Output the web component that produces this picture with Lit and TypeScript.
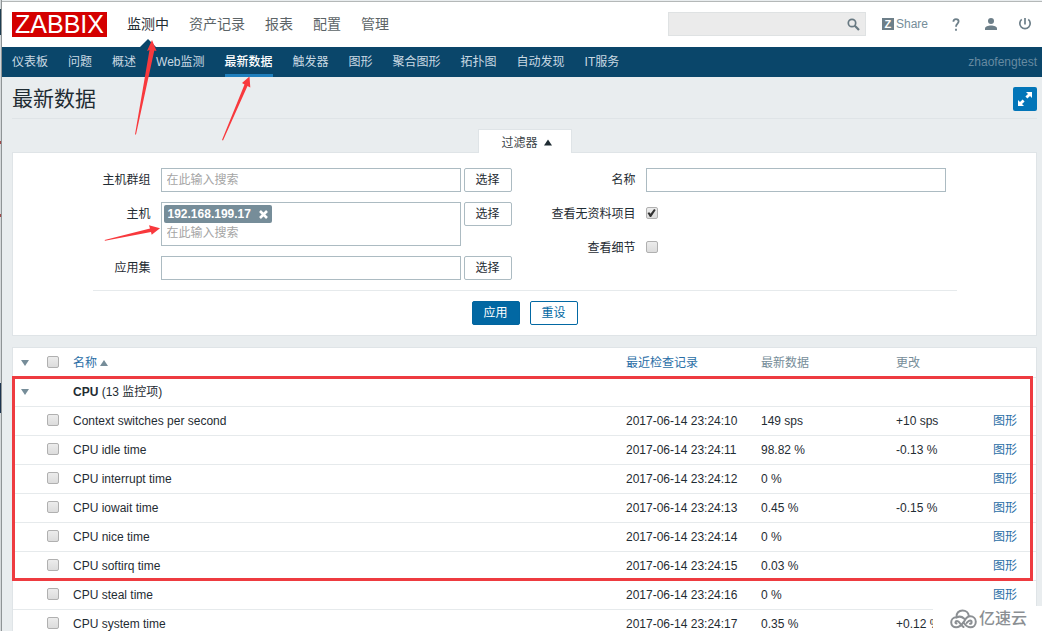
import { LitElement, html, css, svg, nothing } from "lit";
import { customElement, property } from "lit/decorators.js";
import { classMap } from "lit/directives/class-map.js";

interface Item {
  name: string;
  checked: string;
  value: string;
  change?: string;
  graph?: boolean;
}

const MENU = ["监测中", "资产记录", "报表", "配置", "管理"];
const SUBMENU = ["仪表板", "问题", "概述", "Web监测", "最新数据", "触发器", "图形", "聚合图形", "拓扑图", "自动发现", "IT服务"];
const ITEMS: Item[] = [
  { name: "Context switches per second", checked: "2017-06-14 23:24:10", value: "149 sps", change: "+10 sps", graph: true },
  { name: "CPU idle time", checked: "2017-06-14 23:24:11", value: "98.82 %", change: "-0.13 %", graph: true },
  { name: "CPU interrupt time", checked: "2017-06-14 23:24:12", value: "0 %", graph: true },
  { name: "CPU iowait time", checked: "2017-06-14 23:24:13", value: "0.45 %", change: "-0.15 %", graph: true },
  { name: "CPU nice time", checked: "2017-06-14 23:24:14", value: "0 %", graph: true },
  { name: "CPU softirq time", checked: "2017-06-14 23:24:15", value: "0.03 %", graph: true },
  { name: "CPU steal time", checked: "2017-06-14 23:24:16", value: "0 %", graph: true },
  { name: "CPU system time", checked: "2017-06-14 23:24:17", value: "0.35 %", change: "+0.12 %" },
];

const base = css`
  * { box-sizing: border-box; }
  a { text-decoration: none; color: inherit; }
  button, input { font: inherit; color: inherit; margin: 0; }
  ul { list-style: none; margin: 0; padding: 0; }
  svg { display: block; }
  .check {
    appearance: none;
    display: block;
    width: 12px;
    height: 12px;
    border: 1px solid #b0b0b0;
    border-radius: 2px;
    background: linear-gradient(#ececec, #dcdcdc);
  }
  .check:checked::before {
    content: "";
    display: block;
    width: 10px;
    height: 10px;
    background: #333;
    clip-path: polygon(10% 50%, 28% 42%, 40% 58%, 76% 10%, 92% 20%, 46% 90%, 34% 90%);
  }
`;

@customElement("top-header")
class TopHeader extends LitElement {
  static styles = [base, css`
    :host { display: block; }
    .bar {
      display: flex;
      align-items: center;
      height: 46px;
      padding: 0 10px 1px;
      background: #fff;
      border-top: 1px solid #b4b8b8;
      color: #5c6467;
    }
    .logo {
      display: flex;
      align-items: center;
      justify-content: center;
      width: 95px;
      height: 25px;
      background: #d40000;
      color: #fff;
      font-size: 25px;
      line-height: 25px;
    }
    .menu { display: flex; gap: 20px; margin-left: 20px; font-size: 14px; }
    .menu a { display: block; position: relative; line-height: 24px; }
    .menu .active { color: #1f2c33; }
    .menu .active::after {
      content: "";
      position: absolute;
      left: 50%;
      top: 27px;
      border: 8px solid transparent;
      border-top: 0;
      border-bottom-color: #0a466a;
      transform: translateX(-50%);
    }
    .search {
      display: flex;
      align-items: center;
      width: 198px;
      height: 24px;
      margin-left: auto;
      background: #ebebeb;
      border: 1px solid #dfe2e3;
    }
    .search input { flex: 1; min-width: 0; height: 22px; border: 0; background: none; padding: 0 5px; outline: none; }
    .search button { border: 0; background: none; padding: 0; margin-right: 5px; }
    .icons { display: flex; align-items: center; margin-left: 16px; color: #768d99; }
    .share { display: flex; align-items: center; gap: 2px; margin-right: 24px; }
    .z { display: grid; place-items: center; width: 12px; height: 12px; background: #6d7f89; color: #fff; font-size: 11px; font-weight: bold; line-height: 12px; }
    .help { display: block; width: 10px; margin-right: 23px; }
    .user { margin-right: 21px; }
  `];

  render() {
    return html`
      <header class="bar">
        <a class="logo" href="#">ZABBIX</a>
        <nav><ul class="menu">
          ${MENU.map((m, i) => html`<li><a href="#" class=${classMap({ active: i === 0 })}>${m}</a></li>`)}
        </ul></nav>
        <form class="search" role="search">
          <input type="text" aria-label="搜索">
          <button type="button" aria-label="搜索">
            <svg width="13" height="13" viewBox="0 0 13 13" fill="none" stroke="#687982" stroke-width="1.7">
              <circle cx="5" cy="5" r="3.7"/><path d="M7.8 7.8l4.2 4.2" stroke-width="2.2"/>
            </svg>
          </button>
        </form>
        <div class="icons">
          <a class="share" href="#"><span class="z">Z</span>Share</a>
          <a class="help" href="#" aria-label="帮助">
            <svg width="8" height="13" viewBox="0 0 8 13" fill="none" stroke="#6d7f89" stroke-width="1.8">
              <path d="M1.400 3.800C1.400 2 2.500 1.200 4 1.200s2.600.8 2.600 2.400C6.600 5.600 4 5.700 4 8.800M4 10.700v2"/>
            </svg>
          </a>
          <a class="user" href="#" aria-label="用户">
            <svg width="12" height="12" viewBox="0 0 12 12" fill="#6d7f89">
              <circle cx="6" cy="3" r="3"/><path d="M0 12V10.6C0 8.600 3 7.600 6 7.600s6 1 6 3V12z"/>
            </svg>
          </a>
          <a href="#" aria-label="退出">
            <svg width="14" height="14" viewBox="0 0 14 14" fill="none" stroke="#6d7f89" stroke-width="1.7">
              <path d="M7 1v6.500M3.700 2.400a5.200 5.200 0 1 0 6.600 0"/>
            </svg>
          </a>
        </div>
      </header>`;
  }
}

@customElement("sub-nav")
class SubNav extends LitElement {
  static styles = [base, css`
    :host { display: block; }
    .bar { display: flex; align-items: center; justify-content: space-between; height: 30px; padding: 0 5px 0 10px; background: #0a466a; color: #c9d9e3; }
    .items { display: flex; gap: 20px; }
    .items a { display: block; height: 30px; line-height: 30px; border-bottom: 3px solid transparent; white-space: nowrap; }
    .items .active { color: #fff; font-weight: 500; border-bottom-color: #1f7fbd; }
    .who { color: #668aa1; }
  `];

  render() {
    return html`<nav class="bar">
      <ul class="items">
        ${SUBMENU.map((m) => html`<li><a href="#" class=${classMap({ active: m === "最新数据" })}>${m}</a></li>`)}
      </ul>
      <span class="who">zhaofengtest</span>
    </nav>`;
  }
}

@customElement("filter-panel")
class FilterPanel extends LitElement {
  static styles = [base, css`
    :host { display: block; }
    .tabrow { display: flex; justify-content: center; }
    .tab {
      display: flex;
      align-items: center;
      justify-content: center;
      gap: 6px;
      width: 94px;
      height: 24px;
      margin-bottom: -1px;
      padding: 2px 0 0 4px;
      background: #fff;
      border: 1px solid #dfe4e7;
      border-bottom: 0;
      position: relative;
      color: #3c4548;
    }
    .card { background: #fff; border: 1px solid #dfe4e7; padding: 15px 10px 10px; }
    .body { max-width: 864px; margin: 0 auto; }
    .cols { display: grid; grid-template-columns: 1fr 1fr; padding-bottom: 10px; border-bottom: 1px solid #e6eaec; }
    .fields { display: grid; gap: 10px; align-content: start; }
    .row { display: grid; align-items: start; }
    .left .row { grid-template-columns: 58px minmax(0, 310px) 51px; }
    .right .row { grid-template-columns: 111px minmax(0, 310px); }
    label { text-align: right; line-height: 24px; white-space: nowrap; }
    .box, .multi, .row > .check { margin-left: 10px; }
    .left .btn { margin-left: 3px; }
    .box, .multi { height: 24px; border: 1px solid #acbbc2; border-radius: 0; background: #fff; padding: 0 5px; outline: none; }
    input::placeholder { color: #a5a5a5; opacity: 1; }
    .multi { height: 44px; padding: 2px; }
    .multi input { display: block; width: 100%; height: 20px; border: 0; padding: 0 3px; outline: none; background: none; }
    .tags { display: flex; }
    .tag { display: inline-flex; align-items: center; gap: 8px; height: 18px; padding: 0 4px; border-radius: 2px; background: #768d99; color: #fff; font-weight: bold; }
    .tag button { padding: 0; border: 0; background: none; }
    .row > .check { margin-top: 5px; }
    .btn { width: 48px; height: 24px; padding: 0; background: #fff; border: 1px solid #acbbc2; border-radius: 2px; color: #1f2c33; line-height: 22px; }
    .actions { display: flex; justify-content: center; gap: 10px; padding-top: 10px; }
    .primary { background: #0268a3; border-color: #02659f; color: #fff; }
    .alt { border-color: #0268a3; color: #0268a3; }
  `];

  render() {
    return html`
      <div class="tabrow"><button class="tab" type="button">过滤器
        <svg width="8" height="7" viewBox="0 0 8 7" fill="#1f2c33"><path d="M4 0.5L8 6.5H0z"/></svg>
      </button></div>
      <form class="card"><div class="body">
        <div class="cols">
          <div class="fields left">
            <div class="row">
              <label for="groups">主机群组</label>
              <input id="groups" class="box" type="text" placeholder="在此输入搜索">
              <button class="btn" type="button">选择</button>
            </div>
            <div class="row">
              <label for="hosts">主机</label>
              <div class="multi">
                <div class="tags"><span class="tag">192.168.199.17
                  <button type="button" aria-label="移除">
                    <svg width="9" height="9" viewBox="0 0 9 9" stroke="#fff" stroke-width="2.6"><path d="M1 1l7 7M8 1L1 8"/></svg>
                  </button></span></div>
                <input id="hosts" type="text" placeholder="在此输入搜索">
              </div>
              <button class="btn" type="button">选择</button>
            </div>
            <div class="row">
              <label for="app">应用集</label>
              <input id="app" class="box" type="text">
              <button class="btn" type="button">选择</button>
            </div>
          </div>
          <div class="fields right">
            <div class="row"><label for="name">名称</label><input id="name" class="box" type="text"></div>
            <div class="row"><label for="nodata">查看无资料项目</label><input id="nodata" class="check" type="checkbox" checked></div>
            <div class="row"><label for="details">查看细节</label><input id="details" class="check" type="checkbox"></div>
          </div>
        </div>
        <div class="actions">
          <button class="btn primary" type="button">应用</button>
          <button class="btn alt" type="button">重设</button>
        </div>
      </div></form>`;
  }
}

@customElement("data-table")
class DataTable extends LitElement {
  @property({ attribute: false }) items: Item[] = [];

  static styles = [base, css`
    :host { display: block; position: relative; }
    table { width: 100%; table-layout: fixed; border-collapse: separate; border-spacing: 0; background: #fff; border: 1px solid #dfe4e7; }
    th, td { height: 29px; padding: 0 5px; text-align: left; font-weight: normal; border-bottom: 1px solid #e6eaec; white-space: nowrap; line-height: 18px; }
    th { height: 30px; color: #768d99; }
    .c-toggle { width: 28px; }
    .c-check { width: 27px; }
    .c-col { width: 135px; }
    .c-change { width: 97px; }
    .c-graph { width: 48px; }
    .toggle { padding-left: 8px; }
    .pick { padding: 0 5px 2px 6px; }
    .toggle button { display: block; padding: 0; border: 0; background: none; }
    a { color: #2a6ea6; }
    .sort { display: inline-flex; align-items: center; gap: 3px; }
    .frame { position: absolute; left: 0; right: 4px; top: 29px; height: 205px; border: 3px solid #ee3b40; pointer-events: none; }
  `];

  private toggle() {
    return html`<button type="button" aria-label="折叠">
      <svg width="8" height="6" viewBox="0 0 8 6" fill="#768d99"><path d="M0 0h8L4 6z"/></svg>
    </button>`;
  }

  render() {
    return html`
      <table>
        <colgroup><col class="c-toggle"><col class="c-check"><col><col class="c-col"><col class="c-col"><col class="c-change"><col class="c-graph"></colgroup>
        <thead><tr>
          <th class="toggle">${this.toggle()}</th>
          <th class="pick"><input class="check" type="checkbox" aria-label="全选"></th>
          <th><a class="sort" href="#">名称<svg width="8" height="7" viewBox="0 0 8 7" fill="#768d99"><path d="M4 1l4 6H0z"/></svg></a></th>
          <th><a href="#">最近检查记录</a></th><th>最新数据</th><th>更改</th><th></th>
        </tr></thead>
        <tbody>
          <tr><td class="toggle">${this.toggle()}</td><td></td><td colspan="5"><b>CPU</b> (13 监控项)</td></tr>
          ${this.items.map((r) => html`<tr>
            <td></td>
            <td class="pick"><input class="check" type="checkbox" aria-label=${r.name}></td>
            <td>${r.name}</td><td>${r.checked}</td><td>${r.value}</td><td>${r.change ?? ""}</td>
            <td>${r.graph ? html`<a href="#">图形</a>` : nothing}</td>
          </tr>`)}
        </tbody>
      </table>
      <div class="frame"></div>`;
  }
}

@customElement("app-root")
class AppRoot extends LitElement {
  static styles = [base, css`
    :host {
      display: block;
      position: relative;
      box-sizing: border-box;
      height: 100vh;
      overflow: hidden;
      padding: 1px 0 0 2px;
      background:
        linear-gradient(#8f9496, #8f9496) 1px 0 / 1px 100% no-repeat,
        linear-gradient(#1d3c50, #1d3c50) 0 9px / 1px 26px no-repeat,
        linear-gradient(#a04a4a, #a04a4a) 0 141px / 1px 3px no-repeat,
        linear-gradient(#a04a4a, #a04a4a) 0 214px / 1px 3px no-repeat,
        linear-gradient(#1d3450, #1d3450) 0 383px / 1px 30px no-repeat,
        linear-gradient(#d4d8da, #d4d8da) 0 0 / 1px 100% no-repeat,
        #e9edef;
      color: #1f2c33;
      font: 12px/18px "Liberation Sans", Arial, "Noto Sans CJK SC", sans-serif;
    }
    .title { display: flex; align-items: center; justify-content: space-between; height: 42px; margin: 0 5px 0 10px; padding-top: 3px; border-bottom: 1px solid #dfe4e7; }
    h1 { margin: 0; font-size: 21px; line-height: 30px; font-weight: normal; }
    .full { display: grid; place-items: center; width: 24px; height: 24px; padding: 0; border: 0; border-radius: 2px; background: #0275b8; }
    main { display: grid; gap: 11px; padding: 10px 5px 0 10px; }
    .arrows { position: absolute; left: 0; top: 0; pointer-events: none; }
    .mark { position: absolute; right: 0; bottom: 0; display: flex; align-items: center; gap: 2px; width: 109px; height: 25px; padding-left: 17px; background: #fff; color: #8b8f93; font-size: 16px; line-height: 25px; font-weight: 500; }
  `];

  render() {
    return html`
      <top-header></top-header>
      <sub-nav></sub-nav>
      <div class="title">
        <h1>最新数据</h1>
        <button class="full" type="button" aria-label="全屏">
          <svg width="16" height="16" viewBox="0 0 16 16" fill="#fff">
            <path d="M9 1h6v6l-2-2-2.600 2.600-2-2L11 3zM7 15H1V9l2 2 2.600-2.600 2 2L5 13z"/>
          </svg>
        </button>
      </div>
      <main>
        <filter-panel></filter-panel>
        <data-table .items=${ITEMS}></data-table>
      </main>
      <svg class="arrows" width="270" height="250" viewBox="0 0 270 250" fill="#f8393d">
        ${["M152 40L156.500 51L154.300 50.500L136 134.500H135L149.500 50L147 51z",
           "M249.500 76.500L250.300 87.500L247.500 86L223 140.500L222 140L244.500 84.500L242 83z",
           "M160 228.300L151.700 234.700L151 232L105 240.800L104.600 240L150 228.600L149 225.300z"].map((d) => svg`<path d=${d}/>`)}
      </svg>
      <div class="mark">
        <svg width="27" height="20" viewBox="0 0 27 20" fill="none" stroke="#8b8f93" stroke-width="2" stroke-linecap="round">
          <path d="M6.500 8.500C6 4 9 1.500 12.500 1.500c3.500 0 6 2.300 6.300 5.300"/>
          <path d="M14 9.500C12 7.500 9 7.300 6.500 8.300 3 8.300 1.200 10.800 1.200 13.300c0 3 2.300 5 5 5 4.500 0 6-3.300 8.300-6.500C16 9 18 7.300 20.300 7.300c3.200 0 5.500 2.400 5.500 5.500s-2.300 5.500-5.300 5.500c-3 0-5-2-6.300-4"/>
          <path d="M6.500 14.500c-1.500 0-1.500-2.500.5-2.500 3 0 3 4.300 6.500 6M20 14.800c2 0 2.300-3.300 0-3.300-1.500 0-2.500 1.500-3.300 2.500"/>
        </svg>亿速云
      </div>`;
  }
}
